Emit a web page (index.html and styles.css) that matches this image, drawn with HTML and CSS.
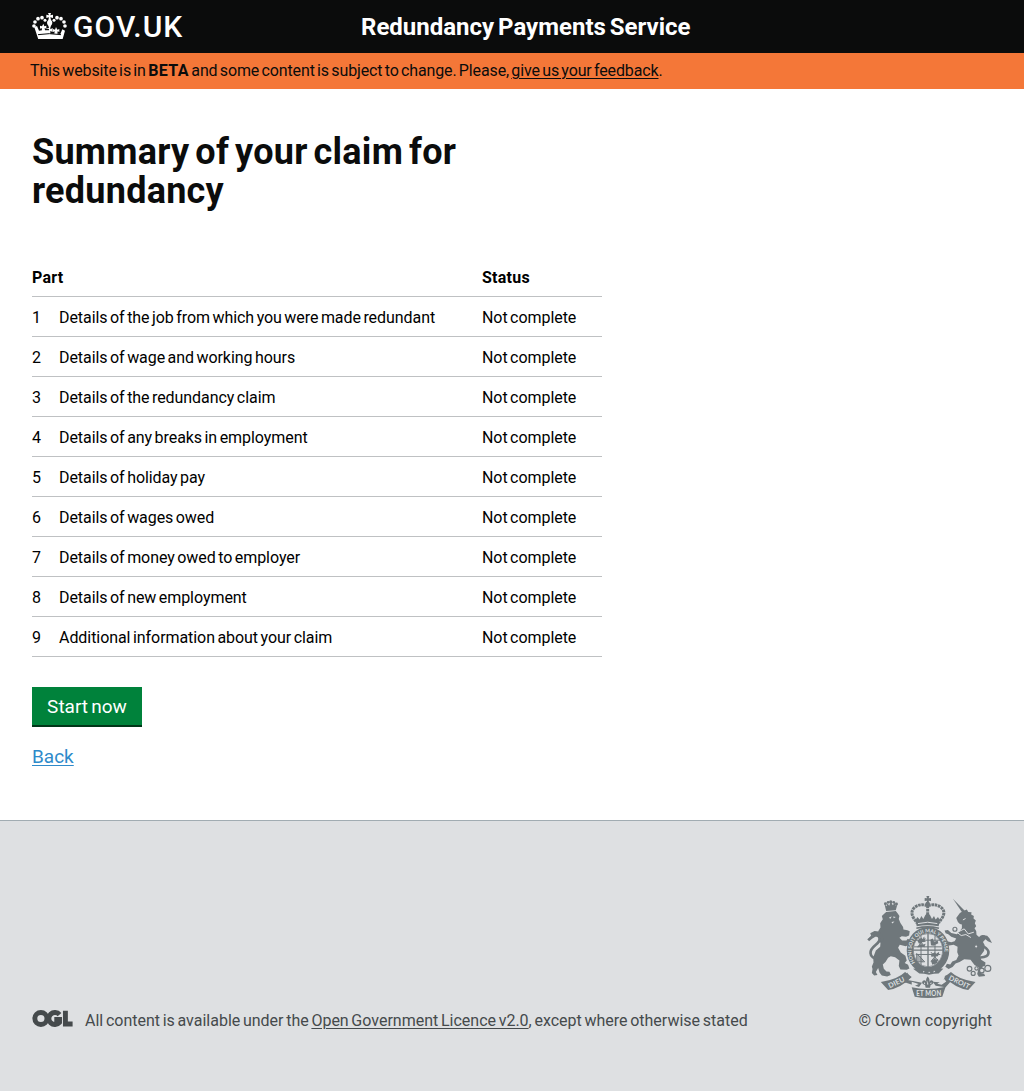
FILE: index.html
```html
<!DOCTYPE html>
<html lang="en">
<head>
<meta charset="utf-8">
<title>Summary of your claim for redundancy</title>
<link rel="stylesheet" href="styles.css">
</head>
<body>
<header class="header">
  <a class="logo" href="#">
    <svg class="logo-crown" viewBox="0 0 105 78" aria-hidden="true">
      <path d="M48 0h9l-2 7 8-2v10l-8-2 2 8q8 8 0 17l-2 6v5l7-4v12l-7-3v8h12l1-7-5 2v-9l6 2 3-8 4 8 6-2v9l-5-2-1 7 9 1 6-14 8 4-9 32q-34-6-69 0L7 43l8-4 6 14 9-1-1-7-5 2v-9l6 2 4-8 3 8 6-2v9l-5-2 1 7h12v-8l-7 3V45l7 4v-5l-2-6q-8-9 0-17l2-8-8 2V5l8 2z"/>
      <circle cx="6" cy="39" r="5.500"/><circle cx="9" cy="27" r="5.500"/><circle cx="18" cy="17" r="5.500"/><circle cx="30" cy="14" r="5.500"/><circle cx="39" cy="22" r="4.500"/>
      <circle cx="99" cy="39" r="5.500"/><circle cx="96" cy="27" r="5.500"/><circle cx="87" cy="17" r="5.500"/><circle cx="75" cy="14" r="5.500"/><circle cx="66" cy="22" r="4.500"/>
      <path class="logo-band" d="M18 65q34-6 69 0"/>
    </svg>
    <span class="logo-text">GOV.UK</span>
  </a>
  <span class="service">Redundancy Payments Service</span>
</header>
<div class="beta">This website is in <b>BETA</b> and some content is subject to change. Please, <a href="#">give us your feedback</a>.</div>
<main class="main">
  <h1 class="title">Summary of your claim for redundancy</h1>
  <table class="parts">
    <colgroup><col class="col-num"><col class="col-name"><col class="col-status"></colgroup>
    <thead><tr><th colspan="2">Part</th><th>Status</th></tr></thead>
    <tbody>
      <tr><td>1</td><td>Details of the job from which you were made redundant</td><td>Not complete</td></tr>
      <tr><td>2</td><td>Details of wage and working hours</td><td>Not complete</td></tr>
      <tr><td>3</td><td>Details of the redundancy claim</td><td>Not complete</td></tr>
      <tr><td>4</td><td>Details of any breaks in employment</td><td>Not complete</td></tr>
      <tr><td>5</td><td>Details of holiday pay</td><td>Not complete</td></tr>
      <tr><td>6</td><td>Details of wages owed</td><td>Not complete</td></tr>
      <tr><td>7</td><td>Details of money owed to employer</td><td>Not complete</td></tr>
      <tr><td>8</td><td>Details of new employment</td><td>Not complete</td></tr>
      <tr><td>9</td><td>Additional information about your claim</td><td>Not complete</td></tr>
    </tbody>
  </table>
  <button class="button">Start now</button>
  <a class="back" href="#">Back</a>
</main>
<footer class="footer">
  <div class="licence">
    <svg class="ogl" viewBox="0 0 123 52" aria-label="OGL">
      <circle cx="26" cy="26" r="18.500"/>
      <path d="M83 14A18.500 18.500 0 1 0 83 38V29H67M101 2V43H123"/>
    </svg>
    <p class="licence-text">All content is available under the <a href="#">Open Government Licence v2.0</a>, except where otherwise stated</p>
  </div>
  <div class="copyright">
    <svg class="arms" viewBox="21 18 375 307" aria-hidden="true">
      <!-- lion -->
      <path d="M73 42l6 7 3-9 5 7 5-12 6 11 6-8 3 9 5-4-5 18-29 2z"/>
      <circle cx="92" cy="36" r="5"/><circle cx="76" cy="41" r="4.500"/><circle cx="109" cy="42" r="4.500"/><circle cx="84" cy="37" r="4"/><circle cx="101" cy="37" r="4"/>
      <path d="M78 66l29-3 6 8 5 7-2 9 5 12 8 12 1 8 12 2 7 3-2 13-9 4-13-2-7 5 8 8 13 0 4-5 9 4-5 14-10 4-18-4-5 9 8 14 14 10 4 14-6 8 10 5 4 11-8 4-19-1-5-10 2-17-13-10-13-3-8 5-8 13-8 7 3 13 8 8 9 1 4 10-11 4-16-3-7-9-4-13-7 12 5 9-10 1-7-7 2-12-2-8 5-12-1-15 8-21 13-11 1-12-7-8 4-15-4-12 7-11-1-13 8-12-3-10 8-7z"/>
      <path class="stroke tail" d="M57 205Q32 208 31 190C29 169 58 164 59 148Q57 134 44 137Q35 141 24 151"/>
      <path d="M20 151l13-13-3-8 13-7 13 2 12 10 1 16-8 8 1-12-10-9-13-2-9 7z"/>
      <path class="light" d="M87 82l8-2-5 7zM99 80l8 1-6 4zM94 96l9-1-6 6z"/>
      <!-- imperial crown -->
      <path d="M199 18h9l-2 7 7-1v9l-7-1 2 9h-9l2-9-7 1v-9l7 1z"/>
      <circle cx="203" cy="42" r="7"/>
      <path class="beads" d="M202 47Q180 40 164 52Q149 65 161 85L171 99M204 47Q226 40 243 52Q259 65 246 85L236 99M203 47V83"/>
      <path d="M166 91l6-10 7 8 5-11 6 9 6-12 7-6 7 6 6 12 6-9 5 11 7-8 6 10-4 18Q202 103 170 109z"/>
      <path class="stroke" d="M169 115Q203 107 237 115"/>
      <path class="light-stroke" d="M174 101Q203 93 232 101"/>
      <!-- garter and shield -->
      <ellipse cx="204" cy="181" rx="54" ry="60" class="garter"/>
      <ellipse cx="204" cy="181" rx="44" ry="50" class="shield"/>
      <path class="fine" d="M167 151h74M162 171h83M167 194h74M183 139v86M225 139v86M174 141l19 31M193 141l-19 31M213 187l23 28M236 187l-23 28"/>
      <path d="M172 153l12-9 4 4 9-4-3 9 4 3-12 1-9 5zM172 169l11-6 5 2 9-3-4 9-20 1zM211 150l7-4 5 11 10-6 2 9-15 8-7-2zM213 193l12-6 3 5 10-3-4 10-20 2zM213 214l11-8 4 4 7-3-4 13-14 5z"/>
      <path class="fine" d="M170 216V191l24 25zM174 195v20M180 199v17M186 207v10"/>
      <path class="cross" d="M204 130V233M159 181H249"/>
      <path id="motto" class="none" d="M166 220A50 56 0 1 1 242 220"/>
      <text class="motto-text"><textPath href="#motto" startOffset="2">HONI SOIT QUI MAL Y PENSE</textPath></text>
      <path d="M159 237l17-2 13 9 18-2 18 2 12-9 13 2-14 14-14 1-15 3-15-3-14-1z"/>
      <path class="light" d="M190 243l4 3-5 2zM207 245l4 4-6 1zM222 242l4 4-6 2z"/>
      <!-- unicorn -->
      <path d="M279 26L316 64l-7 7z"/>
      <path d="M289 84l11-15 10-6 11-4 4 7 10 1-1 7 8 4-1 8 7 6-3 8 4 9-5 6 5 8 1 12 15 13 9 17-1 18-12 16 3 11 13 8-1 10-8 3-5 19 10 2 3 7-19 2-5-8 5-20-13-7-12-16-19-2-14 9-12 4-9 11-12 6-10-7 5-9 10 2 6-9 12-4 7-14-4-10 1-16-12-6-13 2-10-5 3-8 13 3 10-3 5-8-15-5-9-8-8-3-3-8 10-2 10 9 17 4 8-9 7-9 0-11-6-2-6-6z"/>
      <path class="stroke tail" d="M359 203Q387 204 386 186C385 172 356 168 358 151Q361 136 375 141"/>
      <path d="M361 147l9-11 12 2 7 7 8 15-13-6-7-6-7 8-3 8z"/>
      <path class="light-stroke" d="M285 116l12 9 16-8 12 15 17-5M292 128l12 9 14-3 15 9M309 90l8-4"/>
      <circle class="ring" cx="285" cy="118" r="6"/><circle class="ring" cx="349" cy="170" r="5"/><circle class="ring" cx="329" cy="237" r="7"/><circle class="ring" cx="340" cy="251" r="6"/><circle class="ring" cx="366" cy="242" r="7"/><circle class="ring" cx="384" cy="236" r="9"/><circle class="ring" cx="350" cy="236" r="5"/>
      <!-- scroll -->
      <path d="M62 277L84 301Q122 296 155 262L135 247Q112 270 62 277z"/>
      <path d="M141 248L152 263 143 271 186 279 177 292 138 279 126 279z"/>
      <path d="M347 277L325 301Q287 296 253 262L273 247Q297 270 347 277z"/>
      <path d="M258 256l18 15-19 22-30-5-9-12 29 2z"/>
      <path class="light" d="M155 276l21 7-17 8-4-5zM253 268l6 7-14 10-13-3z"/>
      <path d="M155 293Q204 304 257 291L247 321Q204 329 164 321z"/>
      <path d="M203 260q9 10 4 18 5-10 12-4 5 8-7 12l-2 8h-13l-2-8q-13-4-7-12 7-6 12 4-5-8 3-18z"/>
      <path class="light" d="M203 272l2 12h-4zM192 277l4 5-4 1zM214 277l-4 5 4 1z"/>
      <text class="scroll-text" transform="translate(89 296) rotate(-26)">DIEU</text>
      <text class="scroll-text" x="169" y="318" textLength="75" lengthAdjust="spacingAndGlyphs">ET MON</text>
      <text class="scroll-text" transform="translate(265 269) rotate(26)">DROIT</text>
    </svg>
    <p class="copyright-text">© Crown copyright</p>
  </div>
</footer>
</body>
</html>
```
FILE: styles.css
```css
* { box-sizing: border-box; }
body { margin: 0; background: #fff; color: #0b0c0c; font: 16px/20px Roboto, sans-serif; }
p, h1 { margin: 0; }
a { color: inherit; text-underline-offset: 2px; text-decoration-thickness: 1px; }

.header { height: 53px; padding-left: 32px; display: flex; align-items: center; background: #0b0c0c; color: #fff; }
.logo { width: 329px; display: flex; align-items: center; gap: 6px; text-decoration: none; }
.logo-crown { width: 35px; height: 26px; margin-bottom: 1px; fill: #fff; }
.logo-band { fill: none; stroke: #0b0c0c; stroke-width: 3; }
.logo-text { padding-top: 1px; font: 500 30px/32px Roboto, sans-serif; letter-spacing: 1.1px; }
.service { font-size: 24px; font-weight: 700; line-height: 30px; word-spacing: -2px; white-space: nowrap; }

.beta { height: 36px; padding: 8px 30px; background: #f47738; letter-spacing: -0.13px; word-spacing: -1.5px; white-space: nowrap; }
.beta b { letter-spacing: 0.4px; }

.main { height: 731px; padding: 44px 32px 0; display: flex; flex-direction: column; align-items: flex-start; }
.title { width: 480px; font-size: 36px; line-height: 39px; font-weight: 700; letter-spacing: 0.25px; word-spacing: -3.2px; }
.parts { width: 570px; margin-top: 45px; border-collapse: collapse; table-layout: fixed; color: #000; letter-spacing: -0.06px; word-spacing: -1.4px; }
.parts th, .parts td { height: 40px; padding: 3px 0 0; border-bottom: 1px solid #bfc1c3; text-align: left; white-space: nowrap; }
.parts th { padding-top: 5px; letter-spacing: 0.25px; }
.col-num { width: 27px; }
.col-name { width: 423px; }
.col-status { width: 120px; }
.button { width: 110px; height: 40px; margin-top: 30px; padding: 3px 0 0; border: 0; border-bottom: 2px solid #003618; background: #00823b; color: #fff; font: 19px/24px Roboto, sans-serif; word-spacing: -1.5px; }
.back { margin-top: 17px; color: #2e8aca; font-size: 19px; line-height: 25px; }

.footer { height: 271px; padding: 75px 32px 0; display: flex; justify-content: space-between; border-top: 1px solid #a1acb2; background: #dee0e2; color: #454a4c; }
.licence { height: 135px; display: flex; align-items: flex-end; gap: 12px; word-spacing: -1.3px; white-space: nowrap; }
.ogl { width: 41px; height: 17px; margin-bottom: 4px; fill: none; stroke: #454a4c; stroke-width: 15; }
.copyright { display: flex; flex-direction: column; align-items: flex-end; }
.copyright-text { margin-top: 13px; letter-spacing: 0.1px; word-spacing: -0.3px; white-space: nowrap; }

.arms { width: 125px; height: 102px; fill: #6f777b; }
.arms .stroke { fill: none; stroke: #6f777b; stroke-width: 5; }
.arms .tail { stroke-width: 8; }
.arms .light { fill: #dee0e2; }
.arms .light-stroke { fill: none; stroke: #dee0e2; stroke-width: 3; }
.arms .beads { fill: none; stroke: #6f777b; stroke-width: 9; stroke-dasharray: 8 2; }
.arms .garter { fill: none; stroke: #6f777b; stroke-width: 20; }
.arms .shield { fill: #dee0e2; stroke: #6f777b; stroke-width: 2; }
.arms .fine { fill: none; stroke: #6f777b; stroke-width: 3; }
.arms .cross { fill: none; stroke: #6f777b; stroke-width: 4; }
.arms .none { fill: none; }
.arms .ring { fill: #dee0e2; stroke: #6f777b; stroke-width: 3.5; }
.arms text { fill: #dee0e2; font-family: Lato, sans-serif; font-weight: 700; word-spacing: 0; }
.arms .motto-text { font-size: 15px; }
.arms .scroll-text { font-size: 21px; letter-spacing: 0.5px; }
```
